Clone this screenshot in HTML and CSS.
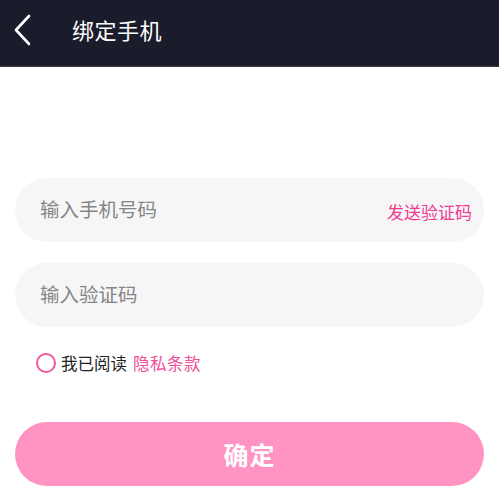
FILE: index.html
```html
<!DOCTYPE html>
<html lang="zh">
<head>
<meta charset="utf-8">
<link rel="stylesheet" href="styles.css">
</head>
<body>
<header class="bar">
  <svg class="back" width="20" height="32" viewBox="0 0 20 32"><path d="M15 2 L2 16 L15 30" fill="none" stroke="#fff" stroke-width="2.6" stroke-linecap="round" stroke-linejoin="round"/></svg>
  <span class="title">绑定手机</span>
</header>
<main class="form">
  <div class="field">
    <span class="ph">输入手机号码</span>
    <span class="send">发送验证码</span>
  </div>
  <div class="field">
    <span class="ph">输入验证码</span>
  </div>
  <div class="agree">
    <span class="circle"></span>
    <span class="read">我已阅读</span>
    <span class="link">隐私条款</span>
  </div>
  <button class="ok">确定</button>
</main>
</body>
</html>
```
FILE: styles.css
```css
* { box-sizing: border-box; }
html, body { margin: 0; padding: 0; background: #fff; }
body { font-family: "Noto Sans CJK SC", "Noto Sans", sans-serif; width: 499px; }
.bar {
  height: 67px;
  background: #1b1c2b;
  border-bottom: 1px solid #3a3b4a;
  display: flex;
  align-items: center;
  padding-left: 14px;
}
.back { display: block; margin-top: -6px; }
.title {
  color: #fff;
  font-size: 22px;
  margin-left: 38px;
  margin-top: -8px;
  letter-spacing: 0.5px;
}
.form {
  padding: 111px 15px 0 15px;
  display: flex;
  flex-direction: column;
}
.field {
  height: 64px;
  border-radius: 32px;
  background: #f6f6f6;
  display: flex;
  align-items: center;
  justify-content: space-between;
  padding: 0 12px 0 25px;
  margin-bottom: 21px;
}
.ph { color: #858585; font-size: 19.5px; margin-top: -4px; }
.send { color: #ee3b92; font-size: 17px; margin-top: 2px; }
.agree {
  display: flex;
  align-items: center;
  margin-top: 3px;
  padding-left: 21px;
  height: 24px;
}
.circle {
  width: 20px; height: 20px;
  border: 2px solid #f0579f;
  border-radius: 50%;
  margin-right: 5px;
}
.read { color: #222; font-size: 16.5px; }
.link { color: #ef4f99; font-size: 16.5px; margin-left: 6px; letter-spacing: 0.5px; }
.ok {
  margin-top: 47px;
  height: 64px;
  border: 0;
  border-radius: 32px;
  background: #ff94c3;
  color: #fff;
  font-family: inherit;
  font-size: 25px;
  font-weight: bold;
  letter-spacing: 1px;
}
```
